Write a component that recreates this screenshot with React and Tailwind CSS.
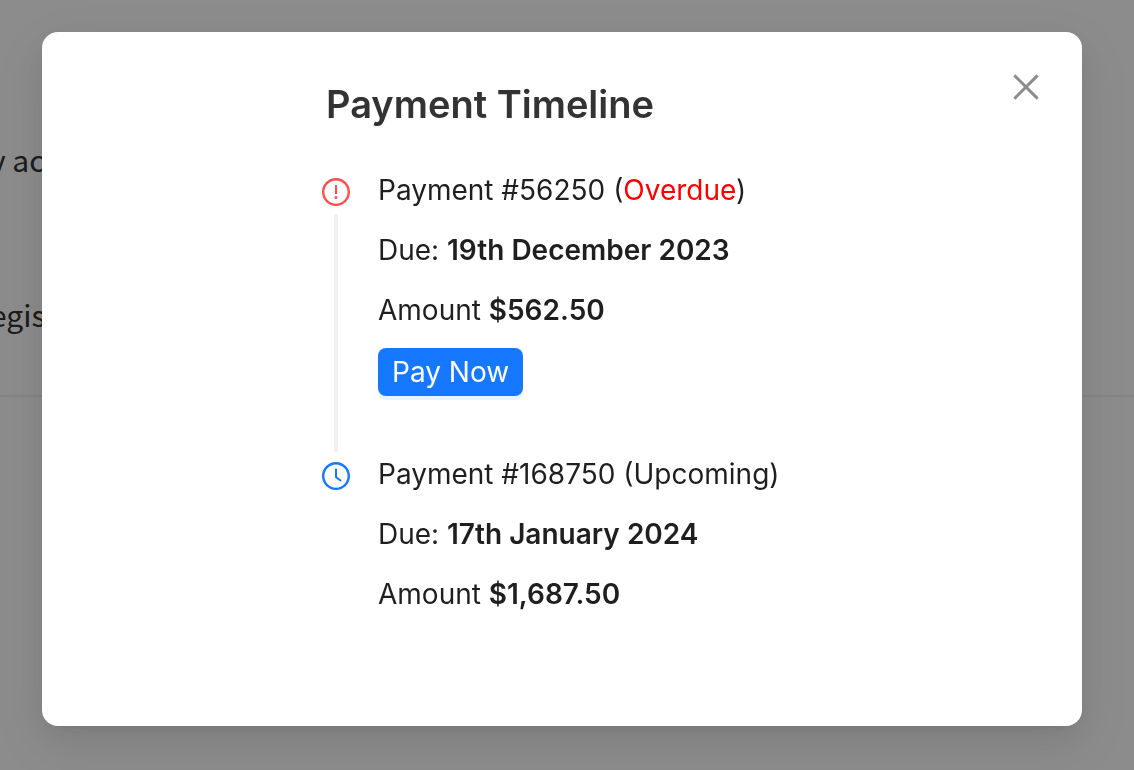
import React, { useState } from 'react';
import { AiOutlineClockCircle, AiOutlineExclamationCircle } from 'react-icons/ai';

const payments = [
    {
        id: '56250',
        status: 'Overdue',
        due: '19th December 2023',
        amount: '$562.50',
        payable: true
    },
    {
        id: '168750',
        status: 'Upcoming',
        due: '17th January 2024',
        amount: '$1,687.50',
        payable: false
    }
];

const TimelineItem = ({ payment, isLast }) => {
    const isOverdue = payment.status === 'Overdue';

    return (
        <li className="flex gap-7">
            <div className="flex flex-col items-center gap-2 pt-[10px]">
                {isOverdue ? (
                    <AiOutlineExclamationCircle className="size-8 -m-0.5 text-[#ff4d4f]" />
                ) : (
                    <AiOutlineClockCircle className="size-8 -m-0.5 text-[#1677ff]" />
                )}
                {!isLast && <div className="w-1 flex-1 bg-[#f0f0f0]" />}
            </div>
            <div className={isLast ? 'flex flex-col items-start gap-4' : 'flex flex-col items-start gap-4 pb-14'}>
                <p>
                    Payment #{payment.id} (
                    <span className={isOverdue ? 'text-[#ff0000]' : ''}>{payment.status}</span>)
                </p>
                <p>
                    Due: <strong className="font-semibold">{payment.due}</strong>
                </p>
                <p>
                    Amount <strong className="font-semibold">{payment.amount}</strong>
                </p>
                {payment.payable && (
                    <button
                        type="button"
                        className="h-12 px-[14px] rounded-lg bg-[#1677ff] text-white shadow-[0_4px_0_rgba(5,145,255,0.1)]"
                    >
                        Pay Now
                    </button>
                )}
            </div>
        </li>
    );
};

const PaymentTimelineModal = ({ onClose }) => (
    <div className="fixed inset-0 overflow-hidden bg-black/45 pt-8 pl-[42px] pr-[52px]">
        <div
            role="dialog"
            aria-labelledby="timeline-title"
            className="relative rounded-2xl bg-white pt-12 pb-[110px] pl-[280px] pr-20 shadow-[0_12px_32px_0_rgba(0,0,0,0.08),0_6px_12px_-8px_rgba(0,0,0,0.12),0_18px_56px_16px_rgba(0,0,0,0.05)]"
        >
            <button
                type="button"
                aria-label="Close"
                onClick={onClose}
                className="absolute top-[39px] right-10 p-0.5 text-[#8c8c8c]"
            >
                <svg width="28" height="28" viewBox="0 0 28 28" fill="none" stroke="currentColor" strokeWidth="3">
                    <path d="M2.4 2.4 25.6 25.6M25.6 2.4 2.4 25.6" />
                </svg>
            </button>
            <h2 id="timeline-title" className="mb-10 pl-1 text-[38px] leading-12 font-semibold text-[#333333]">
                Payment Timeline
            </h2>
            <ul className="text-[28px] leading-11 text-[#1f1f1f]">
                {payments.map((payment, index) => (
                    <TimelineItem key={payment.id} payment={payment} isLast={index === payments.length - 1} />
                ))}
            </ul>
        </div>
    </div>
);

const App = () => {
    const [isOpen, setIsOpen] = useState(true);

    return (
        <div className="min-h-screen overflow-hidden bg-white font-[Inter,sans-serif]">
            {/* page content that runs under the modal */}
            <div className="border-b-2 border-[#f0f0f0] pt-[135px] pb-[57px] font-['Noto_Sans_CJK_SC',sans-serif] text-[30px] leading-12 text-[#333333]">
                <p className="-ml-2.5 whitespace-nowrap">y ac</p>
                <p className="mt-[107px] -ml-2.5 whitespace-nowrap">egis</p>
            </div>
            {isOpen && <PaymentTimelineModal onClose={() => setIsOpen(false)} />}
        </div>
    );
};

export default App;
